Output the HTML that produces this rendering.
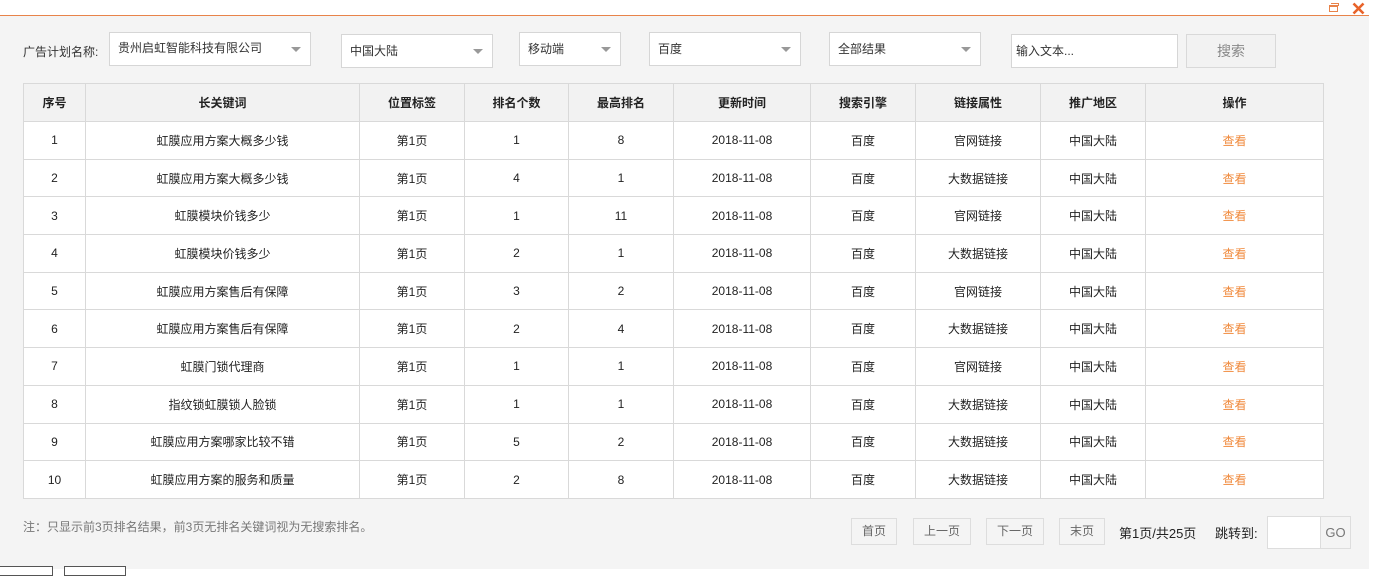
<!DOCTYPE html>
<html><head><meta charset="utf-8"><style>
*{box-sizing:border-box;margin:0;padding:0}
body{width:1377px;height:569px;overflow:hidden;background:#fff;font-family:"Liberation Sans","Noto Sans CJK SC",sans-serif;font-size:12px;color:#333;position:relative}
.bg{position:absolute;left:0;top:15px;width:1369px;height:554px;background:#f4f4f4;border-top:1px solid #e8834a}
.a{position:absolute}
.sel{position:absolute;background:#fff;border:1px solid #d6d6d6;height:34px;line-height:32px;padding-left:8px;font-size:12px;color:#333}
.sel.ar:after{content:"";position:absolute;right:9px;top:14px;border-left:5px solid transparent;border-right:5px solid transparent;border-top:5px solid #999}
table{position:absolute;left:23px;top:83px;border-collapse:collapse;background:#fff;width:1301px}
td,th{border:1px solid #d9d9d9;text-align:center;font-size:12px;height:37.7px;color:#222}
th{background:#f2f2f2;font-weight:bold;height:38px}
td.o{color:#f08a3c}
.pb{position:absolute;top:518px;height:27px;line-height:25px;border:1px solid #ddd;background:#f4f4f4;color:#666;text-align:center;font-size:12px}
</style></head><body>
<div class="bg"></div>
<div class="a" style="left:1329px;top:5px;width:9px;height:7px;border:1.5px solid #e8834a;border-top-width:2.5px"></div>
<div class="a" style="left:1331px;top:3px;width:8px;height:3px;border-top:1.5px solid #e8834a;border-right:1.5px solid #e8834a"></div>
<svg class="a" style="left:1352px;top:2px" width="13" height="13" viewBox="0 0 13 13"><path d="M1.5 1.5L11.5 11.5M11.5 1.5L1.5 11.5" stroke="#e8632a" stroke-width="2.6"/></svg>
<div class="a" style="left:23px;top:43px;font-size:12px">广告计划名称:</div>
<div class="sel ar" style="left:109px;top:32px;width:202px;line-height:30px">贵州启虹智能科技有限公司</div>
<div class="sel ar" style="left:341px;top:34px;width:152px">中国大陆</div>
<div class="sel ar" style="left:519px;top:32px;width:102px">移动端</div>
<div class="sel ar" style="left:649px;top:32px;width:152px">百度</div>
<div class="sel ar" style="left:829px;top:32px;width:152px">全部结果</div>
<div class="sel" style="left:1011px;top:34px;width:167px;padding-left:4px">输入文本...</div>
<div class="a" style="left:1186px;top:34px;width:90px;height:34px;border:1px solid #d9d9d9;background:#f2f2f2;color:#888;text-align:center;line-height:32px;font-size:14px">搜索</div>
<table>
<tr><th style="width:62px">序号</th><th style="width:274px">长关键词</th><th style="width:105px">位置标签</th><th style="width:104px">排名个数</th><th style="width:105px">最高排名</th><th style="width:137px">更新时间</th><th style="width:105px">搜索引擎</th><th style="width:125px">链接属性</th><th style="width:105px">推广地区</th><th>操作</th></tr>
<tr><td>1</td><td>虹膜应用方案大概多少钱</td><td>第1页</td><td>1</td><td>8</td><td>2018-11-08</td><td>百度</td><td>官网链接</td><td>中国大陆</td><td class="o">查看</td></tr>
<tr><td>2</td><td>虹膜应用方案大概多少钱</td><td>第1页</td><td>4</td><td>1</td><td>2018-11-08</td><td>百度</td><td>大数据链接</td><td>中国大陆</td><td class="o">查看</td></tr>
<tr><td>3</td><td>虹膜模块价钱多少</td><td>第1页</td><td>1</td><td>11</td><td>2018-11-08</td><td>百度</td><td>官网链接</td><td>中国大陆</td><td class="o">查看</td></tr>
<tr><td>4</td><td>虹膜模块价钱多少</td><td>第1页</td><td>2</td><td>1</td><td>2018-11-08</td><td>百度</td><td>大数据链接</td><td>中国大陆</td><td class="o">查看</td></tr>
<tr><td>5</td><td>虹膜应用方案售后有保障</td><td>第1页</td><td>3</td><td>2</td><td>2018-11-08</td><td>百度</td><td>官网链接</td><td>中国大陆</td><td class="o">查看</td></tr>
<tr><td>6</td><td>虹膜应用方案售后有保障</td><td>第1页</td><td>2</td><td>4</td><td>2018-11-08</td><td>百度</td><td>大数据链接</td><td>中国大陆</td><td class="o">查看</td></tr>
<tr><td>7</td><td>虹膜门锁代理商</td><td>第1页</td><td>1</td><td>1</td><td>2018-11-08</td><td>百度</td><td>官网链接</td><td>中国大陆</td><td class="o">查看</td></tr>
<tr><td>8</td><td>指纹锁虹膜锁人脸锁</td><td>第1页</td><td>1</td><td>1</td><td>2018-11-08</td><td>百度</td><td>大数据链接</td><td>中国大陆</td><td class="o">查看</td></tr>
<tr><td>9</td><td>虹膜应用方案哪家比较不错</td><td>第1页</td><td>5</td><td>2</td><td>2018-11-08</td><td>百度</td><td>大数据链接</td><td>中国大陆</td><td class="o">查看</td></tr>
<tr><td>10</td><td>虹膜应用方案的服务和质量</td><td>第1页</td><td>2</td><td>8</td><td>2018-11-08</td><td>百度</td><td>大数据链接</td><td>中国大陆</td><td class="o">查看</td></tr>
</table>
<div class="a" style="left:23px;top:518px;color:#777">注：只显示前3页排名结果，前3页无排名关键词视为无搜索排名。</div>
<div class="pb" style="left:851px;width:46px">首页</div>
<div class="pb" style="left:913px;width:58px">上一页</div>
<div class="pb" style="left:986px;width:58px">下一页</div>
<div class="pb" style="left:1059px;width:46px">末页</div>
<div class="a" style="left:1119px;top:523px;font-size:13px;color:#222">第1页/共25页</div>
<div class="a" style="left:1215px;top:523px;font-size:13px;color:#222">跳转到:</div>
<div class="a" style="left:1267px;top:516px;width:54px;height:33px;border:1px solid #ddd;background:#fff"></div>
<div class="a" style="left:1320px;top:516px;width:31px;height:33px;border:1px solid #ddd;background:#f4f4f4;color:#777;text-align:center;line-height:31px;font-size:13px">GO</div>
<div class="a" style="left:-2px;top:566px;width:55px;height:10px;border:1px solid #555;background:#fff"></div>
<div class="a" style="left:64px;top:566px;width:62px;height:10px;border:1px solid #555;background:#fff"></div>
</body></html>
